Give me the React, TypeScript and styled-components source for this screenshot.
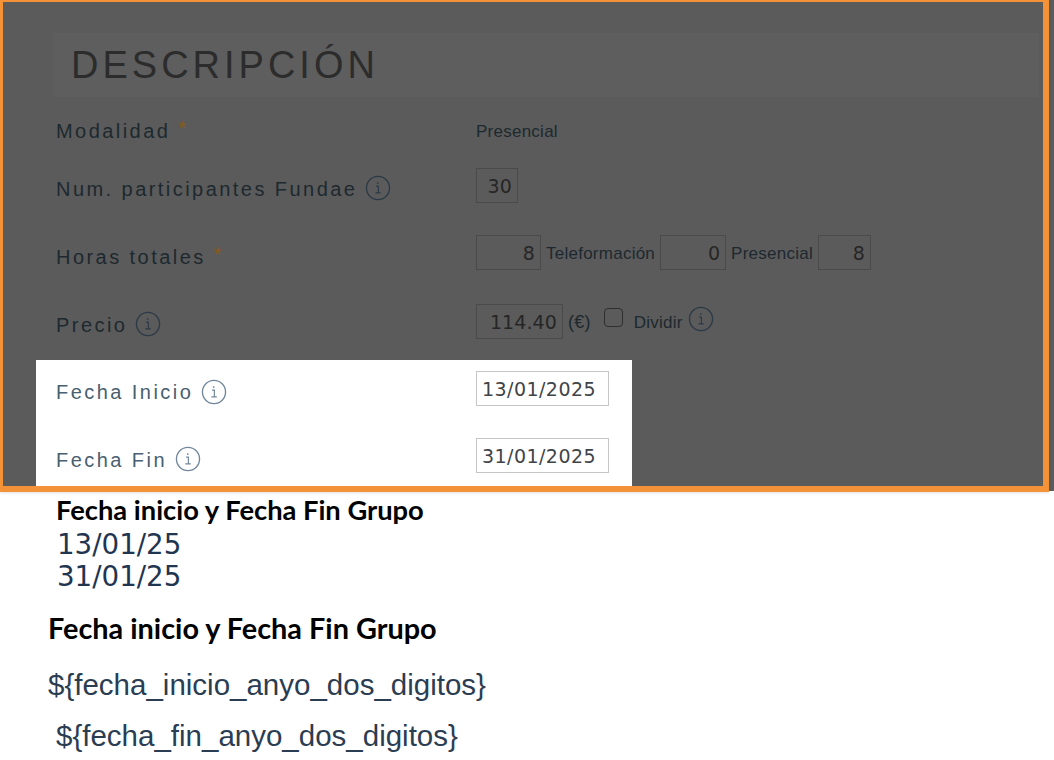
import React from "react";
import styled, { createGlobalStyle } from "styled-components";

const Global = createGlobalStyle`
  html, body { margin: 0; padding: 0; background: #fff; }
  body { width: 1054px; height: 760px; overflow: hidden; font-family: "Liberation Sans", Arial, sans-serif; }
`;

const Page = styled.main`
  width: 1054px;
  height: 760px;
  display: flex;
  flex-direction: column;
`;

const Dimmed = styled.section`
  width: 1054px;
  height: 491px;
  flex: none;
  background: #5b5b5b;
`;

const Frame = styled.div`
  box-sizing: border-box;
  width: 1049px;
  height: 492px;
  border: solid #f39237;
  border-width: 2px 6px 6px 3px;
  padding: 31px 0 0 51px;
  display: flex;
  flex-direction: column;
  align-items: flex-start;
  box-shadow: 0 1px 3px rgba(0, 0, 0, 0.12);
`;

const Heading = styled.h2`
  box-sizing: border-box;
  width: 985px;
  height: 64px;
  margin: 0 0 18px;
  padding: 0 17px;
  display: flex;
  align-items: center;
  background: #5e5e5e;
  color: #2c2c2c;
  font-size: 38px;
  font-weight: 400;
  letter-spacing: 4px;
`;

const Rows = styled.div`
  margin-left: 2px;
  display: flex;
  flex-direction: column;
`;

const Row = styled.div<{ $gap?: number }>`
  display: grid;
  grid-template-columns: 420px auto;
  align-items: start;
  height: 34px;
  margin-top: ${(p) => p.$gap ?? 0}px;
`;

const Label = styled.label<{ $light?: boolean; $drop?: number }>`
  display: flex;
  align-items: center;
  gap: 8px;
  height: 34px;
  margin-top: ${(p) => p.$drop ?? 4}px;
  color: ${(p) => (p.$light ? "#48606f" : "#1d292f")};
  font-size: 20px;
  letter-spacing: 2.45px;
  white-space: nowrap;
`;

const Required = styled.span`
  color: #8a5a17;
  margin-left: 0;
  align-self: flex-start;
  margin-top: 3px;
`;

const Values = styled.div`
  display: flex;
  align-items: center;
  height: 34px;
  color: #1d292f;
  font-size: 17px;
  letter-spacing: 0.25px;
  white-space: nowrap;
`;

const ValueText = styled.span<{ $size?: number; $right?: number }>`
  margin: 3px ${(p) => p.$right ?? 0}px 0 0;
  font-size: ${(p) => p.$size ?? 17}px;
`;

const Field = styled.input<{ $w: number }>`
  box-sizing: border-box;
  width: ${(p) => p.$w}px;
  height: 35px;
  flex: none;
  margin: 0 5px;
  padding: 1px 5px 0 0;
  background: transparent;
  border: 1px solid #4a4a4a;
  border-radius: 0;
  outline: none;
  color: #262626;
  font-family: "DejaVu Sans", sans-serif;
  font-size: 19px;
  letter-spacing: 0.1px;
  text-align: right;
  &:first-child {
    margin-left: 0;
  }
`;

const Check = styled.input`
  appearance: none;
  box-sizing: border-box;
  width: 19px;
  height: 19px;
  margin: -8px 11px 0 13px;
  border: 1.5px solid #2f2f2f;
  border-radius: 4px;
  background: transparent;
`;

const Spotlight = styled.div`
  box-sizing: border-box;
  width: 596px;
  height: 126px;
  margin: 22px 0 0 -20px;
  padding: 11px 0 0 20px;
  background: #fff;
`;

const DateField = styled.input`
  box-sizing: border-box;
  width: 133px;
  height: 35px;
  margin: 0;
  padding: 2px 0 0 5px;
  background: #fff;
  border: 1px solid #c6c6c6;
  border-radius: 0;
  outline: none;
  color: #3f4448;
  font-family: "DejaVu Sans", sans-serif;
  font-size: 19px;
  letter-spacing: 0.45px;
`;

const Notes = styled.section`
  padding-top: 3px;
  display: flex;
  flex-direction: column;
  align-items: flex-start;
`;

const NoteTitle = styled.h3<{ $size: number; $indent: number; $top?: number }>`
  margin: ${(p) => p.$top ?? 0}px 0 0 ${(p) => p.$indent}px;
  color: #000;
  font-family: Lato, sans-serif;
  font-size: ${(p) => p.$size}px;
  line-height: 32px;
  font-weight: 700;
`;

const DateLine = styled.div`
  position: relative;
  top: 3px;
  margin-left: 57px;
  color: #1f3550;
  font-family: "DejaVu Sans", sans-serif;
  font-size: 27.7px;
  line-height: 32px;
`;

const Token = styled.div<{ $indent: number; $top: number }>`
  margin: ${(p) => p.$top}px 0 0 ${(p) => p.$indent}px;
  color: #2b3d52;
  font-size: 29.5px;
  line-height: 32px;
`;

const InfoSvg = styled.svg<{ $up?: number }>`
  flex: none;
  width: 26px;
  height: 26px;
  margin-top: ${(p) => -(p.$up ?? 2)}px;
`;

function Info({ color = "#2c3a47", up }: { color?: string; up?: number }) {
  return (
    <InfoSvg viewBox="0 0 27 27" fill="none" stroke={color} $up={up}>
      <circle cx="13.5" cy="13.5" r="12" strokeWidth="1.4" />
      <path d="M11.5 11.5h2.4v6.8M10.8 18.5h5.6" strokeWidth="1.2" />
      <path d="M13.2 7.6v1.6" strokeWidth="1.6" />
    </InfoSvg>
  );
}

export default function App() {
  return (
    <Page>
      <Global />
      <Dimmed>
        <Frame>
          <Heading>DESCRIPCIÓN</Heading>
          <Rows>
            <Row>
              <Label $drop={-1}>
                Modalidad <Required>*</Required>
              </Label>
              <Values>Presencial</Values>
            </Row>
            <Row $gap={19}>
              <Label>
                Num. participantes Fundae <Info />
              </Label>
              <Values>
                <Field $w={42} readOnly defaultValue="30" />
              </Values>
            </Row>
            <Row $gap={33}>
              <Label $drop={5}>
                Horas totales <Required>*</Required>
              </Label>
              <Values>
                <Field $w={65} readOnly defaultValue="8" />
                <ValueText>Teleformación</ValueText>
                <Field $w={66} readOnly defaultValue="0" />
                <ValueText>Presencial</ValueText>
                <Field $w={53} readOnly defaultValue="8" />
              </Values>
            </Row>
            <Row $gap={35}>
              <Label>
                Precio <Info />
              </Label>
              <Values>
                <Field $w={87} readOnly defaultValue="114.40" />
                <ValueText $size={18}>(€)</ValueText>
                <Check type="checkbox" aria-label="Dividir" />
                <ValueText $right={5}>Dividir</ValueText>
                <Info up={4} />
              </Values>
            </Row>
            <Spotlight>
              <Row>
                <Label $light>
                  Fecha Inicio <Info color="#71869a" up={1} />
                </Label>
                <Values>
                  <DateField readOnly defaultValue="13/01/2025" />
                </Values>
              </Row>
              <Row $gap={33}>
                <Label $light $drop={5}>
                  Fecha Fin <Info color="#71869a" />
                </Label>
                <Values>
                  <DateField readOnly defaultValue="31/01/2025" />
                </Values>
              </Row>
            </Spotlight>
          </Rows>
        </Frame>
      </Dimmed>
      <Notes>
        <NoteTitle $size={27.3} $indent={56}>
          Fecha inicio y Fecha Fin Grupo
        </NoteTitle>
        <DateLine>13/01/25</DateLine>
        <DateLine>31/01/25</DateLine>
        <NoteTitle $size={28.85} $indent={48} $top={22}>
          Fecha inicio y Fecha Fin Grupo
        </NoteTitle>
        <Token $indent={48} $top={25}>
          {"${fecha_inicio_anyo_dos_digitos}"}
        </Token>
        <Token $indent={56} $top={19}>
          {"${fecha_fin_anyo_dos_digitos}"}
        </Token>
      </Notes>
    </Page>
  );
}
